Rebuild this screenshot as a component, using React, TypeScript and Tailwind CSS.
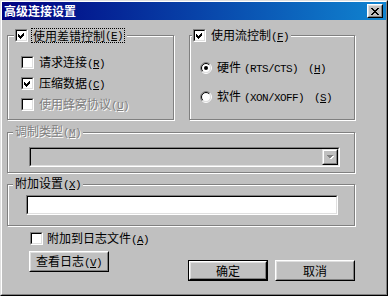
import React from "react";

function Mn({ k }: { k: string }) {
  return (
    <span className="font-['Liberation_Mono',monospace] text-[11px] tracking-[-0.6px]">
      (<u>{k}</u>)
    </span>
  );
}

function CheckBox({ checked = false }: { checked?: boolean }) {
  return (
    <span className="box-border flex h-[13px] w-[13px] shrink-0 border border-solid border-t-[#808080] border-l-[#808080] border-r-white border-b-white">
      <span className="box-border flex h-[11px] w-[11px] items-center justify-center border border-solid border-t-black border-l-black border-r-[#dfdfdf] border-b-[#dfdfdf] bg-white">
        {checked && (
          <svg width="9" height="9" viewBox="0 0 9 9" shapeRendering="crispEdges">
            <polygon points="1,3 3,5 7,1 7,4 3,8 1,6" fill="#000" />
          </svg>
        )}
      </span>
    </span>
  );
}

function Radio({ checked = false }: { checked?: boolean }) {
  return (
    <svg width="12" height="12" viewBox="0 0 12 12" className="shrink-0">
      <circle cx="6" cy="6" r="4.5" fill="#fff" />
      <path d="M2.111 9.889 A5.5 5.5 0 0 1 9.889 2.111" fill="none" stroke="#808080" strokeWidth="1" />
      <path d="M9.889 2.111 A5.5 5.5 0 0 1 2.111 9.889" fill="none" stroke="#fff" strokeWidth="1" />
      <path d="M2.818 9.182 A4.5 4.5 0 0 1 9.182 2.818" fill="none" stroke="#000" strokeWidth="1" />
      <path d="M9.182 2.818 A4.5 4.5 0 0 1 2.818 9.182" fill="none" stroke="#dfdfdf" strokeWidth="1" />
      {checked && <circle cx="6" cy="6" r="2" fill="#000" />}
    </svg>
  );
}

function Btn({ children, def = false }: { children: React.ReactNode; def?: boolean }) {
  const raised = (
    <div className="box-border flex h-full w-full border border-solid border-t-white border-l-white border-r-black border-b-black">
      <div className="box-border flex h-full w-full items-center justify-center border border-solid border-t-[#dfdfdf] border-l-[#dfdfdf] border-r-[#808080] border-b-[#808080]">
        {children}
      </div>
    </div>
  );
  if (def) {
    return <div className="box-border h-[21px] w-[80px] border border-solid border-black">{raised}</div>;
  }
  return <div className="box-border h-[21px] w-[80px]">{raised}</div>;
}

function CloseBtn() {
  const rows: [number, number][] = [
    [0, 0], [6, 0], [1, 1], [5, 1], [2, 2], [4, 2], [3, 3], [2, 4], [4, 4], [1, 5], [5, 5], [0, 6], [6, 6],
  ];
  return (
    <div className="ml-auto box-border h-[14px] w-[16px] border border-solid border-t-white border-l-white border-r-black border-b-black bg-[#c0c0c0]">
      <div className="box-border flex h-full w-full items-center justify-center border border-solid border-t-[#dfdfdf] border-l-[#dfdfdf] border-r-[#808080] border-b-[#808080]">
        <svg width="8" height="7" viewBox="0 0 8 7" shapeRendering="crispEdges" className="mt-[1px]">
          {rows.map(([x, y], i) => (
            <rect key={i} x={x} y={y} width={2} height={1} fill="#000" />
          ))}
        </svg>
      </div>
    </div>
  );
}

const disabledText = "text-[#808080] [text-shadow:1px_1px_0_#fff]";

export default function App() {
  return (
    <div className="h-[296px] w-[388px] bg-[#c0c0c0] font-['Noto_Sans_CJK_SC',sans-serif] text-[12px] leading-[14px] text-black">
      <div className="box-border h-full w-full border border-solid border-t-[#dfdfdf] border-l-[#dfdfdf] border-r-black border-b-black">
        <div className="box-border flex h-full w-full flex-col border border-solid border-t-white border-l-white border-r-[#808080] border-b-[#808080]">
          {/* Title bar */}
          <div className="flex h-[18px] shrink-0 items-center bg-[linear-gradient(to_right,#000080,#1084d0)] pl-[2px] pr-[3px]">
            <span className="font-bold text-white">高级连接设置</span>
            <CloseBtn />
          </div>

          {/* Body */}
          <div className="flex flex-col pl-[5px] pt-[15px]">
            {/* Row of two groups */}
            <div className="flex w-[348px] justify-between">
              {/* Error control group */}
              <div className="relative box-border h-[85px] w-[167px] border border-solid border-[#808080] shadow-[inset_1px_1px_0_#fff,1px_1px_0_#fff]">
                <div className="absolute left-[6px] top-[-8px] flex h-[15px] items-center gap-[3px] bg-[#c0c0c0] pl-[1px] pr-[2px]">
                  <CheckBox checked />
                  <span className="box-border flex h-[15px] items-center border border-dotted border-black px-[1px]">
                    使用差错控制<Mn k="E" />
                  </span>
                </div>
                <div className="flex flex-col gap-[8px] pl-[13px] pt-[20px]">
                  <div className="flex h-[13px] items-center gap-[5px]">
                    <CheckBox />
                    <span>
                      请求连接<Mn k="R" />
                    </span>
                  </div>
                  <div className="flex h-[13px] items-center gap-[5px]">
                    <CheckBox checked />
                    <span>
                      压缩数据<Mn k="C" />
                    </span>
                  </div>
                  <div className="flex h-[13px] items-center gap-[5px]">
                    <CheckBox />
                    <span className={disabledText}>
                      使用蜂窝协议<Mn k="U" />
                    </span>
                  </div>
                </div>
              </div>

              {/* Flow control group */}
              <div className="relative box-border h-[85px] w-[166px] border border-solid border-[#808080] shadow-[inset_1px_1px_0_#fff,1px_1px_0_#fff]">
                <div className="absolute left-[2px] top-[-8px] flex h-[15px] items-center gap-[5px] bg-[#c0c0c0] pl-[1px] pr-[2px]">
                  <CheckBox checked />
                  <span>
                    使用流控制<Mn k="F" />
                  </span>
                </div>
                <div className="flex flex-col gap-[16px] pl-[10px] pt-[25px]">
                  <div className="flex h-[13px] items-center gap-[5px]">
                    <Radio checked />
                    <span className="whitespace-nowrap">
                      硬件
                      <span className="ml-[3px] font-['Liberation_Mono',monospace] text-[11px] tracking-[-0.6px]">(RTS/CTS)</span>
                      <span className="ml-[10px]">
                        <Mn k="H" />
                      </span>
                    </span>
                  </div>
                  <div className="flex h-[13px] items-center gap-[5px]">
                    <Radio />
                    <span className="whitespace-nowrap">
                      软件
                      <span className="ml-[3px] font-['Liberation_Mono',monospace] text-[11px] tracking-[-0.6px]">(XON/XOFF)</span>
                      <span className="ml-[10px]">
                        <Mn k="S" />
                      </span>
                    </span>
                  </div>
                </div>
              </div>
            </div>

            {/* Modulation type group (disabled) */}
            <div className="relative mt-[12px] box-border h-[41px] w-[348px] border border-solid border-[#808080] shadow-[inset_1px_1px_0_#fff,1px_1px_0_#fff]">
              <div className="absolute left-[5px] top-[-8px] flex h-[14px] items-center bg-[#c0c0c0] px-[2px]">
                <span className={disabledText}>
                  调制类型<Mn k="M" />
                </span>
              </div>
              <div className="pl-[21px] pt-[14px]">
                <div className="box-border flex h-[20px] w-[311px] border border-solid border-t-[#808080] border-l-[#808080] border-r-white border-b-white">
                  <div className="box-border flex flex-1 justify-end border border-solid border-t-black border-l-black border-r-[#dfdfdf] border-b-[#dfdfdf] bg-[#c0c0c0]">
                    <div className="box-border h-[16px] w-[16px] border border-solid border-t-[#dfdfdf] border-l-[#dfdfdf] border-r-black border-b-black">
                      <div className="box-border flex h-full w-full items-center justify-center border border-solid border-t-white border-l-white border-r-[#808080] border-b-[#808080]">
                        <svg width="8" height="5" viewBox="0 0 8 5" shapeRendering="crispEdges">
                          <polygon points="1,1 8,1 4.5,4.5" fill="#fff" />
                          <polygon points="0,0 7,0 3.5,3.5" fill="#808080" />
                        </svg>
                      </div>
                    </div>
                  </div>
                </div>
              </div>
            </div>

            {/* Extra settings group */}
            <div className="relative mt-[11px] box-border h-[42px] w-[348px] border border-solid border-[#808080] shadow-[inset_1px_1px_0_#fff,1px_1px_0_#fff]">
              <div className="absolute left-[5px] top-[-8px] flex h-[14px] items-center bg-[#c0c0c0] px-[2px]">
                <span>
                  附加设置<Mn k="X" />
                </span>
              </div>
              <div className="pl-[18px] pt-[10px]">
                <div className="box-border h-[20px] w-[312px] border border-solid border-t-[#808080] border-l-[#808080] border-r-white border-b-white">
                  <div className="box-border h-full w-full border border-solid border-t-black border-l-black border-r-[#dfdfdf] border-b-[#dfdfdf] bg-white" />
                </div>
              </div>
            </div>

            {/* Bottom area */}
            <div className="mt-[6px] flex w-[348px] items-start">
              <div className="flex flex-col pl-[23px]">
                <div className="flex h-[13px] items-center gap-[4px]">
                  <CheckBox />
                  <span>
                    附加到日志文件<Mn k="A" />
                  </span>
                </div>
                <div className="ml-[-1px] mt-[6px]">
                  <Btn>
                    <span>
                      查看日志<Mn k="V" />
                    </span>
                  </Btn>
                </div>
              </div>
              <div className="ml-auto mt-[28px] flex gap-[7px]">
                <Btn def>确定</Btn>
                <Btn>取消</Btn>
              </div>
            </div>
          </div>
        </div>
      </div>
    </div>
  );
}
